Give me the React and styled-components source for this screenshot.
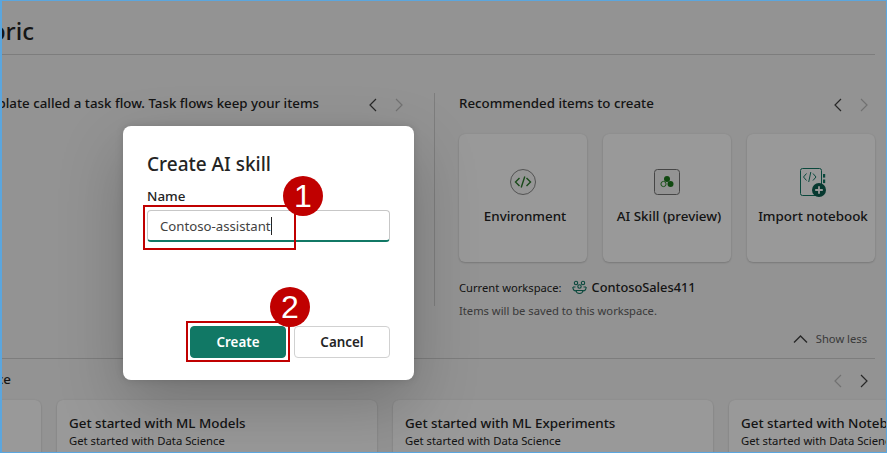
import styled, { createGlobalStyle } from "styled-components"

const GlobalStyle = createGlobalStyle`
    html, body {
        margin: 0;
        padding: 0;
        overflow: hidden;
        font-family: "Noto Sans", "Open Sans", sans-serif;
        color: #242424;
    }
    * { box-sizing: border-box; }
`

const Window = styled.div`
    position: relative;
    width: 887px;
    height: 453px;
    border: 1px solid #5ba6de;
    border-left-width: 2px;
    background: #f5f5f5;
    overflow: hidden;
`
const Page = styled.div`
    width: 873px;
    display: flex;
    flex-direction: column;
`
const Header = styled.div`
    height: 54px;
    border-bottom: 1px solid #d1d1d1;
    display: flex;
    width: 100%;
`
const TitleClip = styled.div`
    width: 32px;
    display: flex;
    justify-content: flex-end;
    padding-top: 13px;
`
const PageTitle = styled.h1`
    margin: 0;
    font-size: 24px;
    line-height: 34px;
    font-weight: 500;
    white-space: nowrap;
`
const Top = styled.section`
    height: 304px;
    padding-top: 38px;
    border-bottom: 1px solid #d1d1d1;
    display: flex;
    flex-direction: column;
`
const TopRow = styled.div`
    display: flex;
    align-items: flex-start;
`
const LeftCol = styled.div`
    width: 432px;
    flex-shrink: 0;
    display: flex;
    justify-content: flex-end;
    align-items: flex-start;
    padding-right: 27px;
`
const LeftText = styled.div`
    font-size: 13.3px;
    font-weight: 500;
    line-height: 20px;
    white-space: nowrap;
    margin-right: 46px;
`
const Divider = styled.div`
    width: 1px;
    height: 213px;
    flex-shrink: 0;
    background: #d1d1d1;
`
const RightCol = styled.div`
    flex: 1;
    padding-left: 24px;
    display: flex;
    flex-direction: column;
`
const SectionHead = styled.div`
    display: flex;
    align-items: flex-start;
    justify-content: space-between;
    height: 41px;
    padding-right: 3px;
`
const SectionTitle = styled.div`
    font-size: 13.3px;
    font-weight: 500;
    line-height: 20px;
    white-space: nowrap;
`
const Arrows = styled.div`
    display: flex;
    gap: 10px;
    padding-top: 4px;
`
const Arrow = styled.svg`
    width: 16px;
    height: 16px;
    fill: none;
    stroke: ${props => (props.$off ? "#bdbdbd" : "#424242")};
    stroke-width: 1.2;
    display: block;
`
const TileRow = styled.div`
    display: flex;
    gap: 16px;
`
const Tile = styled.div`
    width: 128px;
    height: 128px;
    flex-shrink: 0;
    background: #fff;
    border-radius: 6px;
    box-shadow: 0 1px 2px rgba(0, 0, 0, 0.16), 0 0 2px rgba(0, 0, 0, 0.08);
    display: flex;
    flex-direction: column;
    align-items: center;
    padding-top: 34px;
`
const TileIcon = styled.svg`
    width: 28px;
    height: 28px;
    display: block;
    overflow: visible;
`
const TileLabel = styled.div`
    margin: 10px 0 0 4px;
    font-size: 13.4px;
    font-weight: 500;
    line-height: 20px;
    white-space: nowrap;
`
const WorkspaceRow = styled.div`
    margin-top: 14px;
    height: 22px;
    display: flex;
    align-items: center;
    font-size: 11.2px;
    white-space: nowrap;
`
const WorkspaceIcon = styled.svg`
    width: 17px;
    height: 17px;
    margin: 0 4px 0 9px;
    fill: none;
    stroke: #117865;
    stroke-width: 1.1;
`
const WorkspaceName = styled.span`
    font-size: 12.8px;
    font-weight: 500;
`
const SaveNote = styled.div`
    margin-top: 4px;
    font-size: 11.2px;
    line-height: 18px;
    color: #616161;
`
const ShowLess = styled.div`
    margin-top: 9px;
    align-self: flex-end;
    padding-right: 8px;
    display: flex;
    align-items: center;
    gap: 8px;
    font-size: 11.2px;
    line-height: 20px;
    color: #616161;
`
const Up = styled.svg`
    width: 15px;
    height: 15px;
    fill: none;
    stroke: #424242;
    stroke-width: 1.4;
`
const Samples = styled.section`
    padding-top: 10px;
`
const SamplesHead = styled.div`
    height: 31px;
    display: flex;
    align-items: flex-start;
    justify-content: space-between;
    padding-right: 3px;
`
const SamplesClip = styled.div`
    width: 9px;
    display: flex;
    justify-content: flex-end;
`
const CardRow = styled.div`
    display: flex;
    gap: 16px;
    margin-left: -281px;
`
const Card = styled.div`
    width: 320px;
    height: 90px;
    flex-shrink: 0;
    background: #fff;
    border-radius: 6px;
    box-shadow: 0 1px 2px rgba(0, 0, 0, 0.16), 0 0 2px rgba(0, 0, 0, 0.08);
    padding: 13px 12px;
`
const CardTitle = styled.div`
    font-size: 13.4px;
    font-weight: 500;
    line-height: 20px;
    white-space: nowrap;
`
const CardSub = styled.div`
    font-size: 11.3px;
    line-height: 16px;
    white-space: nowrap;
`
const Scrim = styled.div`
    position: absolute;
    inset: 0;
    background: rgba(0, 0, 0, 0.4);
`
const Dialog = styled.div`
    position: absolute;
    left: 121px;
    top: 125px;
    width: 291px;
    height: 254px;
    background: #fff;
    border-radius: 8px;
    box-shadow: 0 25px 65px rgba(0, 0, 0, 0.22), 0 0 8px rgba(0, 0, 0, 0.12);
    padding: 24px 24px 22px;
    display: flex;
    flex-direction: column;
`
const DialogTitle = styled.h2`
    margin: 0;
    font-size: 19px;
    line-height: 28px;
    font-weight: 500;
`
const FieldLabel = styled.label`
    margin-top: 8px;
    font-size: 13.4px;
    font-weight: 500;
    line-height: 20px;
`
const Input = styled.div`
    height: 32px;
    margin-top: 4px;
    border: 1px solid #c7c7c7;
    border-bottom: 2px solid #117865;
    border-radius: 4px;
    padding-left: 12px;
    display: flex;
    align-items: center;
    font-size: 13.2px;
    color: #424242;
`
const Caret = styled.span`
    width: 1px;
    height: 18px;
    background: #242424;
`
const Actions = styled.div`
    margin-top: auto;
    display: flex;
    justify-content: flex-end;
    gap: 8px;
`
const Button = styled.div`
    width: 96px;
    height: 32px;
    border-radius: 4px;
    border: 1px solid ${props => (props.$primary ? "#117865" : "#d1d1d1")};
    background: ${props => (props.$primary ? "#117865" : "#fff")};
    color: ${props => (props.$primary ? "#fff" : "#242424")};
    font-size: 13.4px;
    font-weight: 600;
    display: flex;
    align-items: center;
    justify-content: center;
`
const Callout = styled.div`
    position: absolute;
    left: ${props => props.$x}px;
    top: ${props => props.$y}px;
    width: ${props => props.$w}px;
    height: ${props => props.$h}px;
    border: 2px solid #c00000;
`
const Badge = styled.div`
    position: absolute;
    left: ${props => props.$x}px;
    top: ${props => props.$y}px;
    width: 40px;
    height: 40px;
    border-radius: 50%;
    background: #c00000;
    color: #fff;
    font-family: "Liberation Sans", sans-serif;
    font-size: 32px;
    line-height: 40px;
    text-align: center;
`

const Chevron = ({ dir, off }) => (
    <Arrow viewBox="0 0 16 16" $off={off}>
        <path d={dir === "left" ? "M11 2 L5 8 L11 14" : "M5 2 L11 8 L5 14"} />
    </Arrow>
)

const EnvironmentIcon = () => (
    <TileIcon viewBox="0 0 28 28" fill="none">
        <circle cx="14" cy="14" r="12.5" stroke="#8a8a8a" strokeWidth="1" fill="#fafafa" />
        <path d="M10.5 10 L6.5 14 L10.5 18 M17.5 10 L21.5 14 L17.5 18 M15.8 8.5 L12.2 19.5" stroke="#2c7a2c" strokeWidth="1.4" />
    </TileIcon>
)

const SkillIcon = () => (
    <TileIcon viewBox="0 0 28 28" fill="none">
        <rect x="1.5" y="1.5" width="25" height="25" rx="3" stroke="#757575" strokeWidth="1" fill="#f5f5f5" />
        <circle cx="14" cy="11" r="3" fill="#1c7a1c" />
        <circle cx="17.5" cy="16" r="3" fill="#1c7a1c" />
        <circle cx="10.5" cy="16" r="2.6" stroke="#2c8a2c" strokeWidth="1" />
    </TileIcon>
)

const NotebookIcon = () => (
    <TileIcon viewBox="0 0 28 28" fill="none">
        <rect x="3.5" y="0.5" width="21" height="27" rx="2" stroke="#117865" strokeWidth="1" />
        <path d="M9.5 5.5 L6.5 9 L9.5 12.5 M16 5.5 L19 9 L16 12.5 M13.8 4 L11.7 14" stroke="#117865" strokeWidth="1" />
        <rect x="26" y="6" width="2.2" height="3.6" fill="#117865" />
        <rect x="26" y="11.5" width="2.2" height="3.6" fill="#117865" />
        <circle cx="22" cy="22" r="7" fill="#0c5f50" />
        <path d="M22 18.2 V25.8 M18.2 22 H25.8" stroke="#fff" strokeWidth="1.8" />
    </TileIcon>
)

const tiles = [
    { label: "Environment", Icon: EnvironmentIcon },
    { label: "AI Skill (preview)", Icon: SkillIcon },
    { label: "Import notebook", Icon: NotebookIcon },
]

const cards = ["Get started with Data Science", "Get started with ML Models", "Get started with ML Experiments", "Get started with Notebooks"]

const App = () => {
    return (
        <Window>
            <GlobalStyle />
            <Page>
                <Header>
                    <TitleClip>
                        <PageTitle>Microsoft Fabric</PageTitle>
                    </TitleClip>
                </Header>
                <Top>
                    <TopRow>
                        <LeftCol>
                            <LeftText>Organize your work with a template called a task flow. Task flows keep your items</LeftText>
                            <Arrows>
                                <Chevron dir="left" />
                                <Chevron dir="right" off />
                            </Arrows>
                        </LeftCol>
                        <Divider />
                        <RightCol>
                            <SectionHead>
                                <SectionTitle>Recommended items to create</SectionTitle>
                                <Arrows>
                                    <Chevron dir="left" />
                                    <Chevron dir="right" off />
                                </Arrows>
                            </SectionHead>
                            <TileRow>
                                {tiles.map(({ label, Icon }) => (
                                    <Tile key={label}>
                                        <Icon />
                                        <TileLabel>{label}</TileLabel>
                                    </Tile>
                                ))}
                            </TileRow>
                            <WorkspaceRow>
                                Current workspace:
                                <WorkspaceIcon viewBox="0 0 17 17">
                                    <circle cx="5" cy="4" r="1.7" />
                                    <circle cx="12" cy="4" r="1.7" />
                                    <circle cx="8.5" cy="7.5" r="1.7" />
                                    <path d="M2 8 H4.5 M12.5 8 H15 M1.8 8 C2 11 3.5 12 5 12 M15.2 8 C15 11 13.5 12 12 12 M5 11.5 C5.5 15.5 11.5 15.5 12 11.5 Z" />
                                </WorkspaceIcon>
                                <WorkspaceName>ContosoSales411</WorkspaceName>
                            </WorkspaceRow>
                            <SaveNote>Items will be saved to this workspace.</SaveNote>
                        </RightCol>
                    </TopRow>
                    <ShowLess>
                        <Up viewBox="0 0 15 15"><path d="M1 10.5 L7.5 4 L14 10.5" /></Up>
                        Show less
                    </ShowLess>
                </Top>
                <Samples>
                    <SamplesHead>
                        <SamplesClip>
                            <SectionTitle>Data Science</SectionTitle>
                        </SamplesClip>
                        <Arrows>
                            <Chevron dir="left" off />
                            <Chevron dir="right" />
                        </Arrows>
                    </SamplesHead>
                    <CardRow>
                        {cards.map(title => (
                            <Card key={title}>
                                <CardTitle>{title}</CardTitle>
                                <CardSub>Get started with Data Science</CardSub>
                            </Card>
                        ))}
                    </CardRow>
                </Samples>
            </Page>
            <Scrim />
            <Dialog>
                <DialogTitle>Create AI skill</DialogTitle>
                <FieldLabel>Name</FieldLabel>
                <Input>
                    Contoso-assistant
                    <Caret />
                </Input>
                <Actions>
                    <Button $primary>Create</Button>
                    <Button>Cancel</Button>
                </Actions>
                <Callout $x={20} $y={79} $w={153} $h={45} />
                <Callout $x={63} $y={195} $w={104} $h={41} />
                <Badge $x={160} $y={50}>1</Badge>
                <Badge $x={147} $y={161}>2</Badge>
            </Dialog>
        </Window>
    )
}

export default App
